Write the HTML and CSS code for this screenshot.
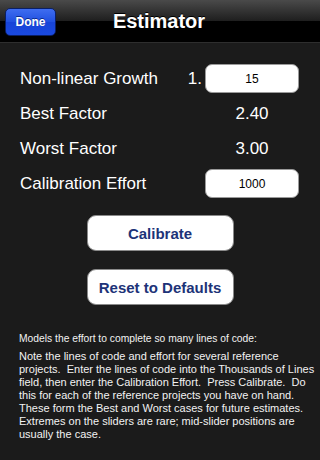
FILE: index.html
```html
<!DOCTYPE html>
<html lang="en">
<head>
    <meta charset="UTF-8">
    <meta name="viewport" content="width=device-width, initial-scale=1.0">
    <title>Estimator</title>
    <link rel="stylesheet" href="styles.css">
</head>
<body>

    <!-- Top bar -->
    <div class="navbar">
        <button class="done-btn">Done</button>
        <h1>Estimator</h1>
    </div>

    <!-- Fields -->
    <div class="form">
        <div class="row">
            <span class="label">Non-linear Growth</span>
            <div class="value">
                <span class="prefix">1.</span>
                <input class="field" type="text" value="15">
            </div>
        </div>
        <div class="row">
            <span class="label">Best Factor</span>
            <div class="value"><span class="number">2.40</span></div>
        </div>
        <div class="row">
            <span class="label">Worst Factor</span>
            <div class="value"><span class="number">3.00</span></div>
        </div>
        <div class="row">
            <span class="label">Calibration Effort</span>
            <div class="value">
                <input class="field" type="text" value="1000">
            </div>
        </div>
    </div>

    <div class="actions">
        <button class="big-btn">Calibrate</button>
        <button class="big-btn">Reset to Defaults</button>
    </div>

    <div class="help">
        <p class="help-title">Models the effort to complete so many lines of code:</p>
        <p>Note the lines of code and effort for several reference<br>
        projects.&nbsp; Enter the lines of code into the Thousands of Lines<br>
        field, then enter the Calibration Effort.&nbsp; Press Calibrate.&nbsp; Do<br>
        this for each of the reference projects you have on hand.<br>
        These form the Best and Worst cases for future estimates.<br>
        Extremes on the sliders are rare; mid-slider positions are<br>
        usually the case.</p>
    </div>

</body>
</html>
```

FILE: styles.css
```css
body {
    font-family: "Liberation Sans", Arial, sans-serif;
    background-color: #1b1b1b;
    color: #fff;
    margin: 0;
    padding: 0;
    width: 320px;
    height: 460px;
    overflow: hidden;
}

/* Top bar */
.navbar {
    height: 42px;
    background: linear-gradient(to bottom, #4a4a4a 0%, #1e1e1e 50%, #000 51%, #000 100%);
    border-bottom: 1px solid #2e2e2e;
    display: flex;
    align-items: center;
    position: relative;
}
.navbar h1 {
    margin: 0;
    flex: 1;
    text-align: center;
    font-size: 20px;
    font-weight: bold;
    text-shadow: 0 -1px 0 #000;
    padding-right: 2px;
}
.done-btn {
    position: absolute;
    left: 5px;
    top: 8px;
    width: 51px;
    height: 28px;
    border: 1px solid #0a1f66;
    border-radius: 5px;
    background: linear-gradient(to bottom, #3f6df0 0%, #2050e0 50%, #1744d8 51%, #1a4ae0 100%);
    color: #fff;
    font-family: "Liberation Sans", Arial, sans-serif;
    font-size: 12px;
    font-weight: bold;
    text-shadow: 0 -1px 0 #0b2a8a;
    padding: 0;
}

/* Fields */
.form {
    padding: 20px 21px 0 20px;
    display: flex;
    flex-direction: column;
    gap: 4px;
}
.row {
    display: flex;
    align-items: center;
    height: 31px;
}
.label {
    flex: 1;
    font-size: 17px;
}
.value {
    width: 94px;
    display: flex;
    align-items: center;
    justify-content: center;
    position: relative;
}
.prefix {
    position: absolute;
    right: 97px;
    font-size: 17px;
}
.number {
    font-size: 17px;
}
.field {
    width: 94px;
    height: 29px;
    box-sizing: border-box;
    border: 1px solid #9a9a9a;
    border-radius: 7px;
    background: #fff;
    text-align: center;
    font-family: "Liberation Sans", Arial, sans-serif;
    font-size: 12px;
    color: #000;
    padding: 0;
}

/* Buttons */
.actions {
    display: flex;
    flex-direction: column;
    align-items: center;
    gap: 18px;
    margin-top: 16px;
}
.big-btn {
    width: 147px;
    height: 36px;
    background: #fff;
    border: 1px solid #8a8a8a;
    border-radius: 9px;
    color: #1d3378;
    font-family: "Liberation Sans", Arial, sans-serif;
    font-size: 15px;
    font-weight: bold;
    padding: 0;
}

/* Help text */
.help {
    padding: 27px 0 0 19px;
    font-size: 11px;
    line-height: 13px;
    color: #f2f2f2;
    white-space: nowrap;
}
.help p {
    margin: 0;
}
.help-title {
    font-size: 10.3px;
    margin-bottom: 5px !important;
}
```
